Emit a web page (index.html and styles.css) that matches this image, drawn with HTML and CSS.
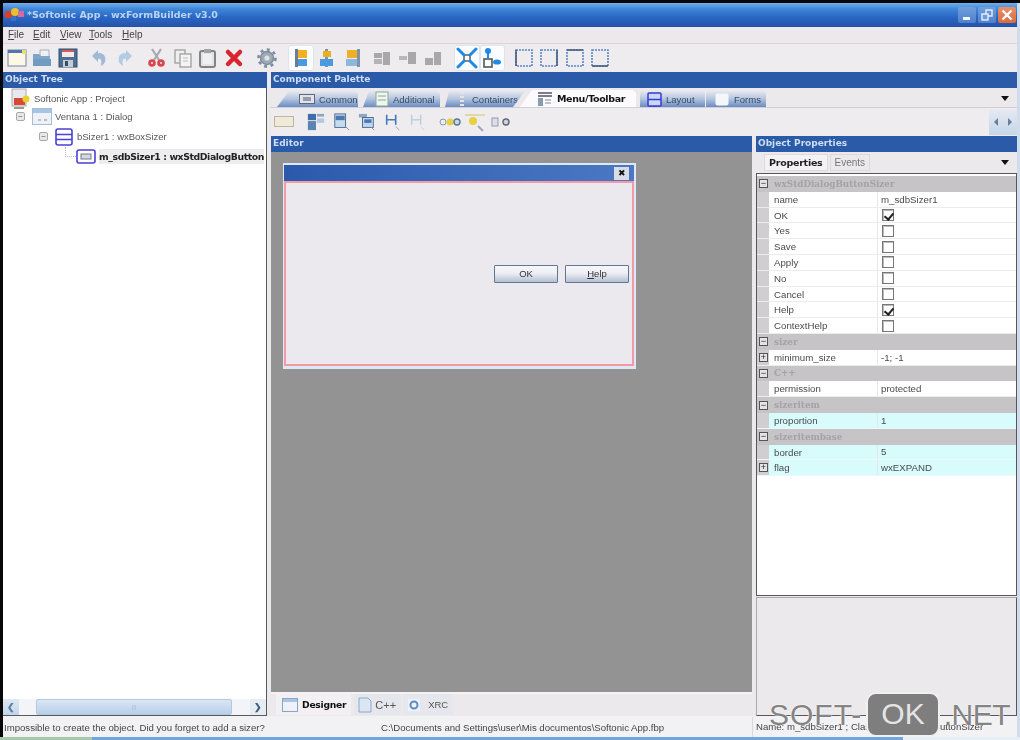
FILE: index.html
```html
<!DOCTYPE html>
<html lang="en">
<head>
<meta charset="utf-8">
<title>Softonic App - wxFormBuilder v3.0</title>
<link rel="stylesheet" href="styles.css">
</head>
<body>
<div class="frame">
  <div class="window">
    <header class="titlebar">
      <svg class="app-icon" width="20" height="16" viewBox="0 0 20 16"><rect x="0" y="4" width="7" height="7" fill="#d8402c"/><circle cx="10" cy="5" r="4" fill="#e8c030"/><rect x="13" y="4" width="6" height="6" fill="#d86a9a"/><rect x="6" y="9" width="5" height="5" fill="#3e6fc0"/></svg>
      <span class="title-text">*Softonic App - wxFormBuilder v3.0</span>
      <span class="win-btns">
        <span class="win-btn"><svg width="16" height="16" viewBox="0 0 16 16"><rect x="4" y="10" width="7" height="3" fill="#f2f6fb"/></svg></span>
        <span class="win-btn"><svg width="16" height="16" viewBox="0 0 16 16"><rect x="7" y="3" width="6" height="6" fill="none" stroke="#e8f0fa" stroke-width="1.4"/><rect x="3" y="7" width="6" height="6" fill="#6d9bd8" stroke="#e8f0fa" stroke-width="1.4"/></svg></span>
        <span class="win-btn close"><svg width="16" height="16" viewBox="0 0 16 16"><path d="M3.5 3.5l9 9M12.500 3.5l-9 9" stroke="#fff" stroke-width="2.4"/></svg></span>
      </span>
    </header>
    <nav class="menubar">
      <span><u>F</u>ile</span><span><u>E</u>dit</span><span><u>V</u>iew</span><span><u>T</u>ools</span><span><u>H</u>elp</span>
    </nav>
    <div class="toolbar">
      <span class="tool"><svg width="20" height="20" viewBox="0 0 20 20"><rect x="1" y="2" width="18" height="16" fill="#fbf8e4" stroke="#8c98a8" stroke-width="1.200"/><rect x="1" y="2" width="18" height="3" fill="#4f78ae"/><rect x="15" y="2" width="4" height="4" fill="#e8dc80"/></svg></span>
      <span class="tool"><svg width="20" height="20" viewBox="0 0 20 20"><path d="M8 2h9v7H8z" fill="#eef0f2" stroke="#a8b0b8"/><path d="M1 6h6l2 2h9v10H1z" fill="#7fa6c6"/><path d="M1 11h18v7H1z" fill="#6f9cc0"/></svg></span>
      <span class="tool"><svg width="20" height="20" viewBox="0 0 20 20"><rect x="1" y="1" width="18" height="18" fill="#4d6f93" stroke="#33506e"/><rect x="4" y="2" width="12" height="7" fill="#f4e8e8"/><rect x="4" y="2" width="12" height="2" fill="#d05c5c"/><rect x="5" y="12" width="10" height="7" fill="#c6ccd4"/><rect x="7" y="13" width="3" height="5" fill="#33506e"/></svg></span>
      <span class="tool gap-a"><svg width="20" height="20" viewBox="0 0 20 20"><path d="M9 2L3 8l6 6v-3c3-1 4 1 3 7 4-2 5-5 4-9-1-3-3-4-7-4z" fill="#a0bad6"/></svg></span>
      <span class="tool"><svg width="20" height="20" viewBox="0 0 20 20"><path d="M11 2l6 6-6 6v-3c-3-1-4 1-3 7-4-2-5-5-4-9 1-3 3-4 7-4z" fill="#b4cce2"/></svg></span>
      <span class="tool gap-b"><svg width="20" height="20" viewBox="0 0 20 20"><path d="M5 1l7 11M14 1L7 12" stroke="#a8a8b0" stroke-width="2.200"/><circle cx="5" cy="15" r="3.800" fill="#d84850"/><circle cx="14" cy="15" r="3.800" fill="#d84850"/><circle cx="5" cy="15" r="1" fill="#f4e8e8"/><circle cx="14" cy="15" r="1" fill="#f4e8e8"/></svg></span>
      <span class="tool"><svg width="20" height="20" viewBox="0 0 20 20"><rect x="2" y="2" width="10" height="13" fill="#eee" stroke="#a4a4a4" stroke-width="1.400"/><rect x="7" y="6" width="11" height="13" fill="#f4f4f4" stroke="#a4a4a4" stroke-width="1.400"/><path d="M10 10h5M10 13h5" stroke="#bbb"/></svg></span>
      <span class="tool"><svg width="20" height="20" viewBox="0 0 20 20"><rect x="2" y="3" width="15" height="16" rx="2" fill="#e4e4e4" stroke="#808484" stroke-width="2"/><rect x="6" y="1" width="7" height="4" fill="#a0a4a4"/><rect x="5" y="6" width="9" height="10" fill="#f0f0f0"/></svg></span>
      <span class="tool"><svg width="20" height="20" viewBox="0 0 20 20"><path d="M4 4l12 12M16 4L4 16" stroke="#d8262c" stroke-width="4.500" stroke-linecap="round"/></svg></span>
      <span class="tool gap-c"><svg width="20" height="20" viewBox="0 0 20 20"><circle cx="10" cy="10" r="6.500" fill="#a0aab4" stroke="#7c8ca0" stroke-width="1.400"/><circle cx="10" cy="10" r="8.500" fill="none" stroke="#7c8ca0" stroke-width="2.600" stroke-dasharray="3 3.600"/><circle cx="10" cy="10" r="2.600" fill="#dde2e8"/></svg></span>
      <span class="tool active gap-c"><svg width="20" height="20" viewBox="0 0 20 20"><rect x="4" y="1" width="3" height="18" fill="#6c7c92"/><rect x="7" y="2" width="9" height="8" fill="#f0b020"/><rect x="7" y="11" width="9" height="7" fill="#4a9ae0"/></svg></span>
      <span class="tool"><svg width="20" height="20" viewBox="0 0 20 20"><rect x="9" y="1" width="3" height="18" fill="#8092a6"/><rect x="7" y="3" width="8" height="6" fill="#e8b020"/><rect x="4" y="11" width="13" height="7" fill="#4a9ae0"/></svg></span>
      <span class="tool"><svg width="20" height="20" viewBox="0 0 20 20"><rect x="15" y="1" width="3" height="18" fill="#8092a6"/><rect x="5" y="2" width="10" height="8" fill="#eeb028"/><rect x="4" y="11" width="11" height="7" fill="#8cb8e0"/></svg></span>
      <span class="tool gap-d"><svg width="20" height="20" viewBox="0 0 20 20"><rect x="2" y="5" width="8" height="5" fill="#a8a8a8"/><rect x="11" y="4" width="7" height="13" fill="#a8a8a8"/><rect x="2" y="11" width="8" height="5" fill="#b4b4b4"/></svg></span>
      <span class="tool"><svg width="20" height="20" viewBox="0 0 20 20"><rect x="1" y="8" width="8" height="4" fill="#b8b8b8"/><rect x="10" y="4" width="8" height="12" fill="#a8a8a8"/></svg></span>
      <span class="tool"><svg width="20" height="20" viewBox="0 0 20 20"><rect x="2" y="10" width="8" height="7" fill="#a8a8a8"/><rect x="11" y="4" width="7" height="13" fill="#a8a8a8"/></svg></span>
      <span class="tool active gap-c"><svg width="22" height="22" viewBox="0 0 22 22"><rect x="8" y="8" width="6" height="6" fill="none" stroke="#555" stroke-width="1.400"/><path d="M2 2l6 6M20 2l-6 6M2 20l6-6M20 20l-6-6" stroke="#1e8ae6" stroke-width="3" stroke-linecap="round"/></svg></span>
      <span class="tool active"><svg width="22" height="22" viewBox="0 0 22 22"><rect x="3" y="12" width="8" height="8" fill="none" stroke="#555" stroke-width="1.600"/><circle cx="7" cy="4" r="3" fill="#1e8ae6"/><path d="M7 6v6" stroke="#1e8ae6" stroke-width="2"/><ellipse cx="16" cy="15" rx="4" ry="2.600" fill="#1e8ae6"/></svg></span>
      <span class="tool gap-a"><svg width="20" height="20" viewBox="0 0 20 20"><rect x="2" y="2" width="16" height="16" fill="none" stroke="#5a86c4" stroke-width="1.600" stroke-dasharray="2 1"/><path d="M2 2v16" stroke="#4a5f80" stroke-width="1.600"/></svg></span>
      <span class="tool"><svg width="20" height="20" viewBox="0 0 20 20"><rect x="2" y="2" width="16" height="16" fill="none" stroke="#5a86c4" stroke-width="1.600" stroke-dasharray="2 1"/><path d="M18 2v16" stroke="#4a5f80" stroke-width="1.600"/></svg></span>
      <span class="tool"><svg width="20" height="20" viewBox="0 0 20 20"><rect x="2" y="2" width="16" height="16" fill="none" stroke="#5a86c4" stroke-width="1.600" stroke-dasharray="2 1"/><path d="M2 2h16" stroke="#4a5f80" stroke-width="1.600"/></svg></span>
      <span class="tool"><svg width="20" height="20" viewBox="0 0 20 20"><rect x="2" y="2" width="16" height="16" fill="none" stroke="#5a86c4" stroke-width="1.600" stroke-dasharray="2 1"/><path d="M2 18h16" stroke="#4a5f80" stroke-width="1.600"/></svg></span>
    </div>

    <div class="workspace">
      <aside class="tree-pane">
        <h2 class="pane-head">Object Tree</h2>
        <div class="tree-box">
          <ul class="tree">
            <li class="node lvl0"><svg width="22" height="22" viewBox="0 0 22 22"><rect x="1" y="1" width="14" height="17" fill="#e8e8f0" stroke="#b0a8a8"/><rect x="3" y="10" width="11" height="7" fill="#d84838"/><circle cx="15" cy="11" r="3.500" fill="#e8d030"/><path d="M3 20h10" stroke="#776" stroke-width="1.500"/></svg><span>Softonic App : Project</span></li>
            <li class="node lvl1"><span class="exp">&#8722;</span><svg width="20" height="17" viewBox="0 0 20 17"><rect x=".5" y=".5" width="19" height="16" fill="#eef2f8" stroke="#a8bcd4"/><rect x="1" y="1" width="18" height="4" fill="#a8c4e4"/><path d="M6 12h3M12 12h3" stroke="#889"/></svg><span>Ventana 1 : Dialog</span></li>
            <li class="node lvl2"><span class="exp">&#8722;</span><svg width="18" height="18" viewBox="0 0 18 18"><rect x="1" y="1" width="16" height="16" rx="2" fill="#fff" stroke="#4a40d8" stroke-width="1.600"/><path d="M1 6.500h16M1 11.500h16" stroke="#4a40d8" stroke-width="1.600"/></svg><span>bSizer1 : wxBoxSizer</span></li>
            <li class="node lvl3 sel"><span class="elbow"></span><svg width="20" height="15" viewBox="0 0 20 15"><rect x="1" y="1" width="18" height="13" rx="2" fill="#fff" stroke="#4a40d8" stroke-width="1.600"/><rect x="5" y="5" width="10" height="5" fill="#d4d8e0" stroke="#778"/></svg><span>m_sdbSizer1 : wxStdDialogButton</span></li>
          </ul>
          <div class="hscroll">
            <span class="sb-btn">&#10094;</span>
            <span class="sb-thumb">|||</span>
            <span class="sb-btn end">&#10095;</span>
          </div>
        </div>
      </aside>

      <main class="main-pane">
        <h2 class="pane-head">Component Palette</h2>
        <div class="palette-tabs">
          <span class="ptab t-common"><svg width="16" height="10" viewBox="0 0 16 10"><rect x=".5" y=".5" width="15" height="9" fill="#dde4ee" stroke="#667"/><rect x="4" y="3" width="8" height="4" fill="#99a"/></svg>Common</span>
          <span class="ptab t-additional"><svg width="14" height="16" viewBox="0 0 14 16"><rect x="1" y="1" width="12" height="14" fill="#eef6ee" stroke="#8a9"/><path d="M3 5h8M3 9h8" stroke="#8a9"/></svg>Additional</span>
          <span class="ptab t-containers"><svg width="14" height="16" viewBox="0 0 14 16"><path d="M7 1v14" stroke="#e4e4e4" stroke-width="4" stroke-dasharray="2 2"/></svg>Containers</span>
          <span class="ptab on t-menu"><svg width="16" height="16" viewBox="0 0 16 16"><path d="M1 2h14M1 5h14" stroke="#556" stroke-width="1.600"/><rect x="1" y="7" width="5" height="8" fill="#8a9ab0"/><path d="M8 9h6M8 12h6" stroke="#889"/></svg>Menu/Toolbar</span>
          <span class="ptab t-layout"><svg width="15" height="15" viewBox="0 0 15 15"><rect x="1" y="1" width="13" height="13" rx="1" fill="#c8d8f0" stroke="#3838d8" stroke-width="1.500"/><path d="M1 7.500h13" stroke="#3838d8" stroke-width="1.500"/></svg>Layout</span>
          <span class="ptab t-forms"><svg width="14" height="13" viewBox="0 0 14 13"><rect x=".5" y=".5" width="13" height="12" rx="2" fill="#f4f6fa"/></svg>Forms</span>
          <span class="caret tabs-caret"></span>
        </div>
        <div class="palette-tools">
          <span class="ptool"><svg width="20" height="12" viewBox="0 0 20 12"><rect x=".5" y=".5" width="19" height="10" fill="#efe9d8" stroke="#bdb6a0"/></svg></span>
          <span class="ptool sp1"><svg width="18" height="18" viewBox="0 0 20 20"><rect x="1" y="1" width="9" height="7" fill="#3f6ea8"/><rect x="11" y="1" width="8" height="3" fill="#8fa6c0"/><rect x="1" y="9" width="9" height="10" fill="#5d83b0"/><rect x="11" y="6" width="8" height="5" fill="#b4c8e0"/></svg></span>
          <span class="ptool"><svg width="18" height="18" viewBox="0 0 20 20"><rect x="2" y="1" width="12" height="15" fill="#c8dcf0" stroke="#47648a"/><rect x="3" y="3" width="10" height="5" fill="#4a78b0"/><path d="M14 15l4 4" stroke="#88a"/></svg></span>
          <span class="ptool"><svg width="18" height="18" viewBox="0 0 20 20"><rect x="1" y="1" width="9" height="4" fill="#8fa6c0"/><rect x="5" y="5" width="12" height="11" fill="#c0d6f0" stroke="#47648a"/><rect x="7" y="7" width="8" height="4" fill="#4a78b0"/><path d="M15 16l3 3" stroke="#88a"/></svg></span>
          <span class="ptool"><svg width="18" height="18" viewBox="0 0 20 20"><path d="M3 2v11M13 2v11M3 7.500h10" stroke="#4878b8" stroke-width="1.800"/><path d="M13 15l4 4" stroke="#99b"/></svg></span>
          <span class="ptool"><svg width="18" height="18" viewBox="0 0 20 20"><path d="M3 2v11M13 2v11M3 7.500h10" stroke="#c4cfdd" stroke-width="1.800"/><path d="M13 15l4 4" stroke="#ccd"/></svg></span>
          <span class="ptool sp3"><svg width="22" height="12" viewBox="0 0 22 12"><circle cx="4" cy="6" r="3" fill="#e8eef4" stroke="#8a9aac"/><circle cx="11" cy="6" r="3.500" fill="#e8d040"/><circle cx="18" cy="6" r="3" fill="#c8d8e8" stroke="#5c7898" stroke-width="1.400"/></svg></span>
          <span class="ptool"><svg width="22" height="20" viewBox="0 0 22 20"><path d="M1 3h20" stroke="#d8c070"/><circle cx="9" cy="9" r="4" fill="#e8d040"/><path d="M14 14l5 5" stroke="#9ab" stroke-width="2"/></svg></span>
          <span class="ptool"><svg width="22" height="12" viewBox="0 0 22 12"><rect x="2" y="2" width="6" height="8" fill="#dde" stroke="#99a"/><circle cx="16" cy="6" r="3" fill="#c8d4e0" stroke="#667" stroke-width="1.400"/></svg></span>
          <span class="scroll-pair"><span class="arrow-l"></span><span class="arrow-r"></span></span>
        </div>
        <div class="lower">
          <section class="editor-pane">
            <h2 class="pane-head">Editor</h2>
            <div class="canvas">
              <div class="dialog">
                <div class="dlg-title"><span class="dlg-close">&#10006;</span></div>
                <div class="dlg-body">
                  <div class="dlg-buttons">
                    <span class="dlg-btn">OK</span>
                    <span class="dlg-btn"><u>H</u>elp</span>
                  </div>
                </div>
              </div>
            </div>
            <div class="view-tabs">
              <span class="vtab on"><svg width="16" height="14" viewBox="0 0 16 14"><rect x=".5" y=".5" width="15" height="13" fill="#eef2f8" stroke="#8aa4c4"/><rect x="1" y="1" width="14" height="3" fill="#a8c4e4"/></svg>Designer</span>
              <span class="vtab cpp"><svg width="14" height="16" viewBox="0 0 14 16"><path d="M1 1h9l3 3v11H1z" fill="#dbe6f4" stroke="#8fa8c4"/></svg>C++</span>
              <span class="vtab xrc"><svg width="14" height="14" viewBox="0 0 14 14"><rect x="1" y="1" width="12" height="12" fill="#eef2f8"/><circle cx="7" cy="7" r="3.500" fill="none" stroke="#5c8cc4" stroke-width="2"/></svg>XRC</span>
            </div>
          </section>
          <section class="props-pane">
            <h2 class="pane-head">Object Properties</h2>
            <div class="prop-tabs">
              <span class="ctab on">Properties</span>
              <span class="ctab">Events</span>
              <span class="caret"></span>
            </div>
            <div class="grid">
              <div class="cat"><span class="box">&#8722;</span><b>wxStdDialogButtonSizer</b></div>
              <div class="row"><span class="gut"></span><span class="k">name</span><span class="v">m_sdbSizer1</span></div>
              <div class="row"><span class="gut"></span><span class="k">OK</span><span class="v"><span class="chk on"></span></span></div>
              <div class="row"><span class="gut"></span><span class="k">Yes</span><span class="v"><span class="chk"></span></span></div>
              <div class="row"><span class="gut"></span><span class="k">Save</span><span class="v"><span class="chk"></span></span></div>
              <div class="row"><span class="gut"></span><span class="k">Apply</span><span class="v"><span class="chk"></span></span></div>
              <div class="row"><span class="gut"></span><span class="k">No</span><span class="v"><span class="chk"></span></span></div>
              <div class="row"><span class="gut"></span><span class="k">Cancel</span><span class="v"><span class="chk"></span></span></div>
              <div class="row"><span class="gut"></span><span class="k">Help</span><span class="v"><span class="chk on"></span></span></div>
              <div class="row"><span class="gut"></span><span class="k">ContextHelp</span><span class="v"><span class="chk"></span></span></div>
              <div class="cat"><span class="box">&#8722;</span><b>sizer</b></div>
              <div class="row"><span class="gut"><span class="box">+</span></span><span class="k">minimum_size</span><span class="v">-1; -1</span></div>
              <div class="cat"><span class="box">&#8722;</span><b>C++</b></div>
              <div class="row"><span class="gut"></span><span class="k">permission</span><span class="v">protected</span></div>
              <div class="cat"><span class="box">&#8722;</span><b>sizeritem</b></div>
              <div class="row cyan"><span class="gut"></span><span class="k">proportion</span><span class="v">1</span></div>
              <div class="cat"><span class="box">&#8722;</span><b>sizeritembase</b></div>
              <div class="row cyan"><span class="gut"></span><span class="k">border</span><span class="v">5</span></div>
              <div class="row cyan"><span class="gut"><span class="box">+</span></span><span class="k">flag</span><span class="v">wxEXPAND</span></div>
            </div>
            <div class="desc"></div>
          </section>
        </div>
      </main>
    </div>

    <footer class="statusbar">
      <span class="st-msg">Impossible to create the object. Did you forget to add a sizer?</span>
      <span class="st-path">C:\Documents and Settings\user\Mis documentos\Softonic App.fbp</span>
      <span class="st-name">Name: m_sdbSizer1 ; Class: wxStdDialogButtonSizer</span>
    </footer>
  </div>
  <div class="taskstrip"><span class="ts-a"></span><span class="ts-b"></span><span class="ts-c"></span></div>
</div>
<div class="watermark"><span class="wm-text">SOFT-</span><span class="wm-ok">OK</span><span class="wm-text wm-net">.NET</span></div>
</body>
</html>
```
FILE: styles.css
```css
* { box-sizing: border-box; margin: 0; padding: 0; }
html, body { width: 1020px; height: 740px; overflow: hidden; background: #000; }
body { font-family: "Liberation Sans", Arial, sans-serif; font-size: 10px; color: #333; position: relative; }
svg { display: block; flex: none; }
ul { list-style: none; }

.frame { width: 1020px; height: 740px; padding-top: 3px; background: #080808; display: flex; flex-direction: column; filter: blur(.6px); }
.window { flex: 1; min-height: 0; margin-left: 3px; display: flex; flex-direction: column; background: #ece9ec; border-right: 3px solid #cfdcec; }

.titlebar { height: 24px; display: flex; align-items: center; padding: 0 0 0 2px; background: linear-gradient(#6eb0ec 0, #3f86d8 25%, #2a66c4 60%, #2453a8 100%); }
.app-icon { margin-right: 2px; }
.title-text { font: bold 9.500px "DejaVu Sans", sans-serif; color: #b8d4f2; margin-top: -1px; }
.win-btns { margin-left: auto; display: flex; gap: 2px; padding-right: 1px; }
.win-btn { width: 18px; height: 16px; background: linear-gradient(#6f9fdc, #4f80cc); border-radius: 2px; display: flex; align-items: center; justify-content: center; }
.win-btn.close { background: linear-gradient(#e8906a, #de6a40); }

.menubar { height: 17px; display: flex; align-items: center; padding: 0 0 2px 5px; background: #ece8ec; border-bottom: 1px solid #dcd4d8; color: #444; font-size: 10px; }
.menubar span:nth-child(1) { width: 25px; }
.menubar span:nth-child(2) { width: 27px; }
.menubar span:nth-child(3) { width: 29px; }
.menubar span:nth-child(4) { width: 33px; }

.toolbar { height: 28px; display: flex; align-items: center; padding-left: 1px; background: #efecef; }
.tool { width: 25.500px; height: 26px; display: flex; align-items: center; justify-content: center; flex: none; }
.tool.active { background: #fbfcfd; border-radius: 3px; box-shadow: 0 0 0 1px #dde4ec inset; }
.gap-a { margin-left: 6px; }
.gap-b { margin-left: 7px; }
.gap-c { margin-left: 8px; }
.gap-d { margin-left: 5px; }

.workspace { flex: 1; min-height: 0; display: flex; gap: 4px; }
.pane-head { height: 16px; background: #2b5aa8; color: #cfdff2; font: bold 9px/15px "DejaVu Sans", sans-serif; padding-left: 2px; flex: none; white-space: nowrap; }

.tree-pane { width: 264px; display: flex; flex-direction: column; }
.tree-box { flex: 1; min-height: 0; display: flex; flex-direction: column; background: #fff; border-right: 1px solid #58595c; border-bottom: 1px solid #58595c; overflow: hidden; }
.tree { flex: 1; }
.node { height: 19.200px; display: flex; align-items: center; white-space: nowrap; color: #555; position: relative; }
.node span:last-child { font-size: 9.500px; }
.lvl0 { padding-left: 8px; gap: 0; margin-top: 1px; }
.lvl0 span { margin-left: 1px; }
.lvl1 { padding-left: 13px; margin-top: -1px; }
.lvl1 svg { margin: 0 3px 0 7px; }
.lvl2 { padding-left: 36px; margin-top: 1px; }
.lvl2 svg { margin: 0 4px 0 7px; }
.lvl3 { padding-left: 58px; }
.lvl3 svg { margin: 0 3px 0 15px; }
.lvl3 .elbow { position: absolute; left: 62px; top: 0; width: 11px; height: 10px; border-left: 1px dotted #bbb; border-bottom: 1px dotted #bbb; }
.lvl3 span:last-child { font: bold 9.300px "DejaVu Sans", sans-serif; letter-spacing: -.4px; background: #ededef; color: #222; padding: 2px 0 2px 0; }
.exp { width: 9px; height: 9px; border: 1px solid #a8a8a8; border-radius: 2px; background: #e8e8ea; color: #555; font-size: 8px; line-height: 7px; text-align: center; flex: none; }
.hscroll { height: 16px; display: flex; align-items: stretch; background: #f2f4f8; flex: none; }
.sb-btn { width: 16px; display: flex; align-items: center; justify-content: center; background: linear-gradient(#dfe9f5, #c2d4ea); color: #5b7ea6; font-size: 9px; font-weight: bold; margin-right: 17px; }
.sb-btn.end { margin: 0 0 0 auto; background: #e6ecf4; color: #44607f; }
.sb-thumb { width: 196px; background: linear-gradient(#dae6f4, #b9cfe9); border: 1px solid #b2c8e0; border-radius: 2px; color: #aab8cc; font-size: 6px; display: flex; align-items: center; justify-content: center; }

.main-pane { flex: 1; min-width: 0; display: flex; flex-direction: column; }
.palette-tabs { height: 20px; display: flex; align-items: flex-end; padding-left: 6px; background: #ece9ec; border-bottom: 1px solid #cfcfd4; position: relative; flex: none; }
.ptab { height: 16px; display: flex; align-items: center; gap: 4px; padding-left: 22px; font-size: 9.500px; color: #3a4a68; background: linear-gradient(#e6e8f0 0, #b8c8e0 45%, #6a8cc2 100%); white-space: nowrap; margin-right: 5px; clip-path: polygon(12px 0, calc(100% - 3px) 0, 100% 3px, 100% 100%, 0 100%); }
.ptab.on { background: #fbfbfd; color: #111; font-weight: bold; font-size: 9.500px; font-family: "DejaVu Sans", sans-serif; height: 17px; }
.t-common { width: 81px; }
.t-additional { width: 77px; padding-left: 12px; clip-path: polygon(6px 0, calc(100% - 3px) 0, 100% 3px, 100% 100%, 0 100%); }
.t-containers { width: 80px; padding-left: 10px; gap: 3px; clip-path: polygon(4px 0, 100% 0, calc(100% - 12px) 100%, 0 100%); }
.ptab.t-menu { width: 116px; padding-left: 17px; letter-spacing: -.35px; margin-left: -10px; margin-right: 4px; gap: 4px; }
.t-layout { width: 65px; padding-left: 7px; margin-right: 1px; clip-path: none; border-radius: 3px 3px 0 0; }
.t-forms { width: 60px; padding-left: 9px; gap: 5px; clip-path: none; border-radius: 3px 3px 0 0; }
.caret { width: 0; height: 0; border-left: 4.500px solid transparent; border-right: 4.500px solid transparent; border-top: 5px solid #111; margin-left: auto; }
.tabs-caret { margin-bottom: 6px; margin-right: 8px; }

.palette-tools { height: 28px; display: flex; align-items: center; background: #efecef; flex: none; }
.ptool { width: 25.500px; display: flex; justify-content: center; flex: none; }
.ptool.sp1 { margin-left: 7px; }
.ptool.sp3 { margin-left: 6px; }
.scroll-pair { margin-left: auto; width: 28px; height: 25px; display: flex; align-items: center; justify-content: space-around; background: linear-gradient(#e4e9f2, #c6d6ea); }
.arrow-l { border-top: 4px solid transparent; border-bottom: 4px solid transparent; border-right: 4px solid #667f9c; }
.arrow-r { border-top: 4px solid transparent; border-bottom: 4px solid transparent; border-left: 4px solid #667f9c; }

.lower { flex: 1; min-height: 0; display: flex; gap: 4px; }
.editor-pane { width: 481px; display: flex; flex-direction: column; }
.canvas { flex: 1; min-height: 0; background: #939393; padding: 11px 0 0 12px; border-bottom: 2px solid #f4f2f4; }
.dialog { width: 353px; height: 206px; background: #dfe8f6; padding: 2px 2px 3px 1px; display: flex; flex-direction: column; }
.dlg-title { height: 16px; flex: none; background: linear-gradient(90deg, #2b5aac, #4a78c4); display: flex; align-items: center; justify-content: flex-end; padding-right: 5px; }
.dlg-close { width: 15px; height: 13px; background: #d8dce4; font-size: 9px; line-height: 13px; text-align: center; color: #111; }
.dlg-body { flex: 1; background: #ebe9ee; border: 2px solid #f39aa4; display: flex; flex-direction: column; justify-content: center; align-items: flex-end; padding: 0 3px 0 0; }
.dlg-buttons { display: flex; gap: 7px; }
.dlg-btn { width: 64px; height: 18px; font-size: 9.500px; color: #333; display: flex; align-items: center; justify-content: center; background: linear-gradient(#f6f7fa 0, #eceef3 45%, #b4c0d4 100%); border: 1px solid #5f7896; border-radius: 1px; }
.view-tabs { height: 22px; display: flex; align-items: flex-start; padding-left: 5px; background: #ece9ec; flex: none; }
.vtab { height: 21px; display: flex; align-items: center; gap: 3px; font-size: 9.500px; color: #555; padding: 0 5px 0 4px; margin-right: 3px; background: #e6e7ec; }
.vtab.on { background: #f2f0f3; color: #111; font: bold 9.200px "DejaVu Sans", sans-serif; letter-spacing: -.25px; padding: 0 5px 0 6px; gap: 4px; }
.vtab.cpp { font-size: 11px; }
.vtab.xrc { gap: 7px; margin-left: -1px; }

.props-pane { flex: 1; min-width: 0; display: flex; flex-direction: column; }
.prop-tabs { height: 21px; display: flex; align-items: flex-end; padding: 0 8px 2px 8px; background: #ece9ec; gap: 2px; flex: none; }
.ctab { height: 17px; padding: 0 4px; line-height: 16px; font-size: 10px; color: #777; border: 1px solid #dcdadc; background: #ece9ec; }
.ctab.on { color: #222; font: bold 9.500px/16px "DejaVu Sans", sans-serif; letter-spacing: -.25px; background: #f4f2f5; }
.prop-tabs .caret { margin-bottom: 6px; }
.grid { height: 423px; flex: none; background: #fff; border: 1px solid #58585c; padding-top: 2px; }
.cat { height: 15.800px; display: flex; align-items: center; background: #c6c4c7; }
.cat b { font: bold 8.800px "DejaVu Serif", serif; color: #a4a2a8; margin-left: 6px; }
.box { width: 9px; height: 9px; border: 1px solid #555; font-size: 9px; line-height: 7px; text-align: center; color: #222; background: #e4e4e8; margin-left: 2px; flex: none; }
.row { height: 15.800px; display: flex; background: #fff; border-bottom: 1px solid #ececec; }
.gut { width: 12px; background: #d0ced1; display: flex; align-items: center; flex: none; }
.k { width: 109px; padding-left: 5px; border-right: 1px solid #e8e8e8; line-height: 15px; font-size: 9.700px; color: #4a4a4a; flex: none; }
.v { flex: 1; padding-left: 3px; line-height: 15px; font-size: 9.700px; color: #4a4a4a; display: flex; align-items: center; }
.row.cyan { background: #d8fbfc; border-bottom-color: #eaf8f8; }
.chk { width: 12px; height: 12px; border: 1px solid #777; background: #fff; margin-left: 1px; position: relative; box-shadow: inset 1px 1px 0 #bbb; }
.chk.on::after { content: ""; position: absolute; left: 3px; top: 1px; width: 4px; height: 7px; border: solid #222; border-width: 0 2px 2px 0; transform: rotate(40deg); }
.desc { flex: 1; min-height: 0; margin-top: 1px; border: 1px solid #aaaaae; border-right-color: #58585c; border-bottom-color: #58585c; background: #ece9ec; }

.statusbar { height: 21px; flex: none; display: flex; align-items: center; padding-top: 1px; background: #f2f1f4; font-size: 9.600px; color: #444; white-space: nowrap; }
.st-msg { width: 378px; padding-left: 1px; }
.st-path { width: 371px; }
.st-name { flex: 1; overflow: hidden; padding-left: 3px; border-left: 1px solid #d8d8dc; height: 100%; line-height: 19px; }

.taskstrip { height: 3px; flex: none; display: flex; }
.ts-a { width: 92px; background: #a6c8ae; }
.ts-b { width: 811px; background: #6fa6de; }
.ts-c { flex: 1; background: #e8eef6; }

.watermark { position: absolute; left: 769px; top: 692px; height: 45px; display: flex; align-items: center; font: 30px "Liberation Sans", sans-serif; }
.wm-text { color: #848484; text-shadow: 0 0 2px #fff, 0 0 1px #fff; letter-spacing: 1px; }
.wm-net { letter-spacing: -.5px; margin-left: -1px; }
.wm-ok { height: 45px; margin: 0 5px 0 4px; padding: 0 13px; border-radius: 10px; background: #7e7e7e; border: 2px solid #f0f0f0; line-height: 40px; color: #e4e4e4; }
```
